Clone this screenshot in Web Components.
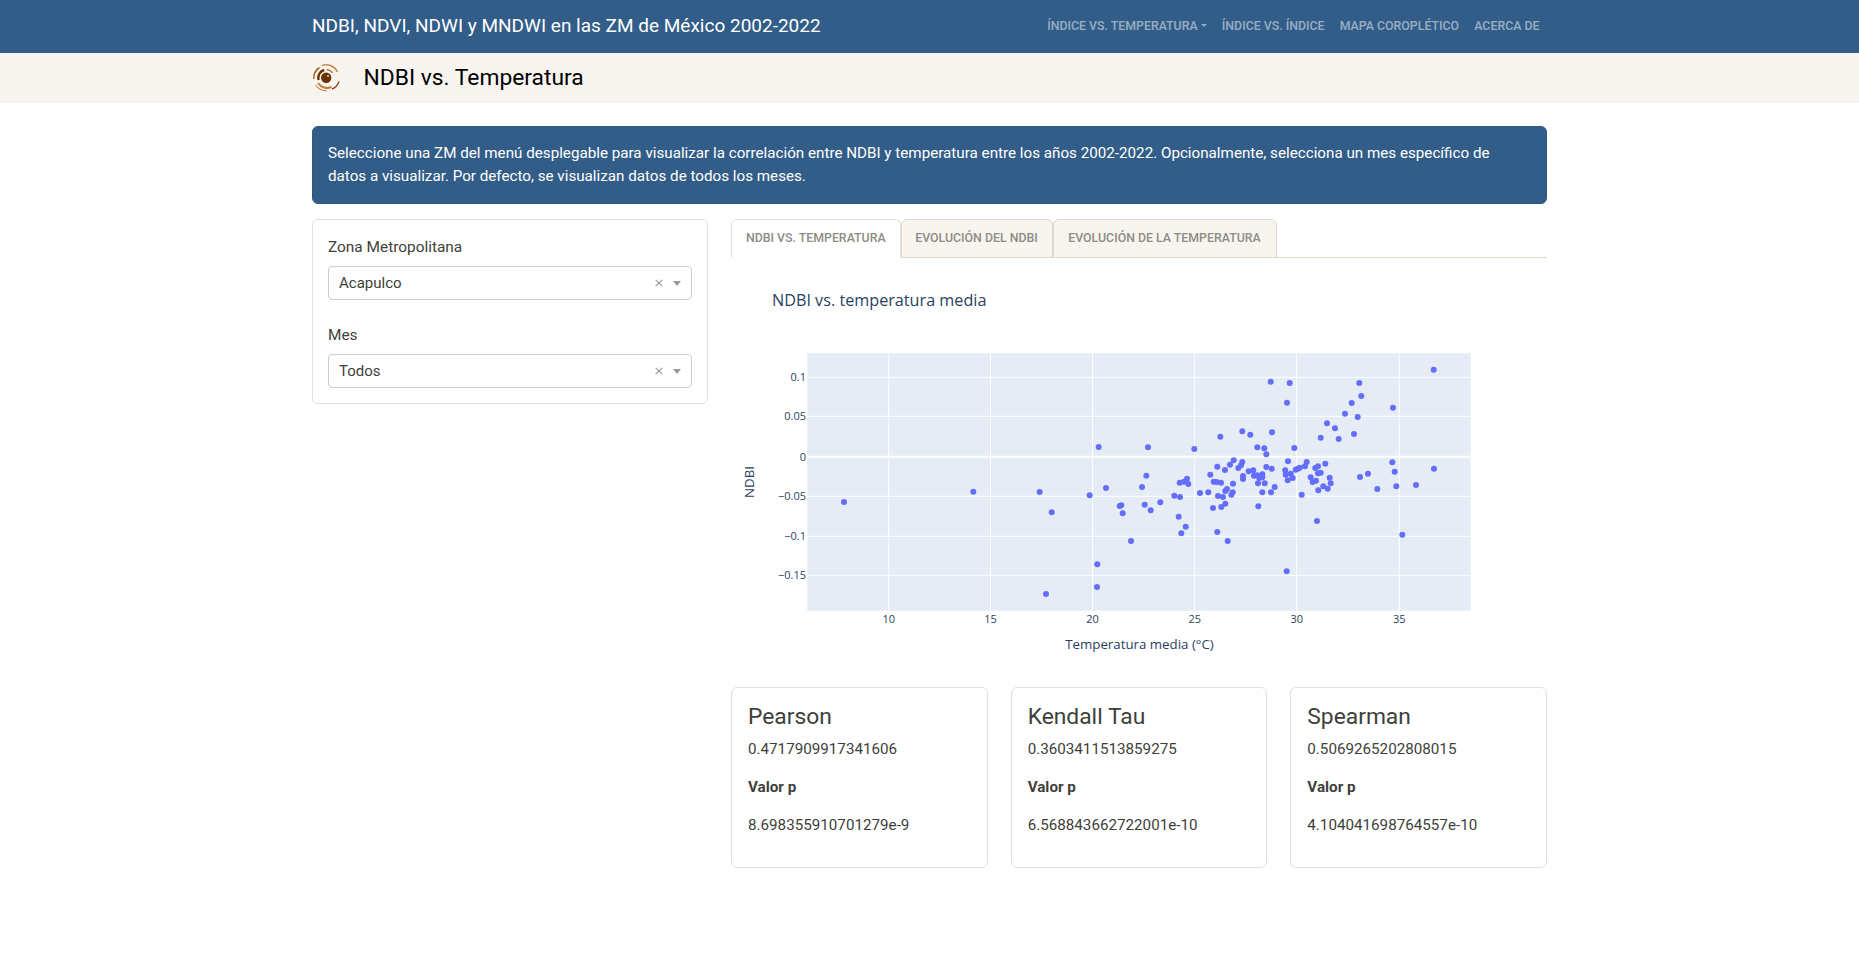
<!DOCTYPE html>
<html lang="es"><head><meta charset="utf-8"><title>NDBI vs. Temperatura</title>
<style>
html,body{margin:0;padding:0;background:#fff}
body{font:15.2px/22.8px Roboto,"Liberation Sans",sans-serif;color:#3e3f3a}
</style></head><body>
<app-navbar></app-navbar>
<page-header heading="NDBI vs. Temperatura"></page-header>
<page-main>
  <info-alert>Seleccione una ZM del menú desplegable para visualizar la correlación entre NDBI y temperatura entre los años 2002-2022. Opcionalmente, selecciona un mes específico de datos a visualizar. Por defecto, se visualizan datos de todos los meses.</info-alert>
  <filter-card slot="side">
    <select-box label="Zona Metropolitana" value="Acapulco"></select-box>
    <select-box label="Mes" value="Todos"></select-box>
  </filter-card>
  <tab-bar slot="content"></tab-bar>
  <scatter-chart slot="content"></scatter-chart>
  <stat-row slot="content">
    <stat-card name="Pearson" value="0.4717909917341606" p="8.698355910701279e-9"></stat-card>
    <stat-card name="Kendall Tau" value="0.3603411513859275" p="6.568843662722001e-10"></stat-card>
    <stat-card name="Spearman" value="0.5069265202808015" p="4.104041698764557e-10"></stat-card>
  </stat-row>
</page-main>
<script>
function def(name, css, html, init){
  customElements.define(name, class extends HTMLElement{
    constructor(){super();this.attachShadow({mode:'open'});}
    connectedCallback(){
      const h = typeof html==='function'?html(this):html;
      this.shadowRoot.innerHTML='<style>'+css+'</style>'+h;
      if(init)init(this);
    }
  });
}
def('app-navbar',`
:host{display:block;background:#325d88;height:53px;box-sizing:border-box;padding-bottom:2px}
.in{width:1235px;margin:0 auto;height:100%;display:flex;align-items:center;justify-content:space-between}
.brand{color:#fff;font-size:19px;line-height:28px}
nav{display:flex;gap:15.2px;padding-right:7.5px}
a{color:rgba(255,255,255,.5);font-size:12.35px;font-weight:500;text-transform:uppercase;line-height:18px;display:flex;align-items:center}
i{display:inline-block;margin-left:3px;border-top:3.5px solid currentColor;border-left:3.5px solid transparent;border-right:3.5px solid transparent}
`,`<div class="in"><div class="brand">NDBI, NDVI, NDWI y MNDWI en las ZM de México 2002-2022</div>
<nav><a>Índice vs. temperatura<i></i></a><a>Índice vs. índice</a><a>Mapa coroplético</a><a>Acerca de</a></nav></div>`);
def('page-header',`
:host{display:block;background:#f8f5f0;height:50px;box-sizing:border-box;padding-bottom:2px}
.in{width:1235px;margin:0 auto;height:100%;display:flex;align-items:center;gap:22px}
svg{width:30px;height:30px;flex:none;margin-left:-.5px}
h1{margin:0;font-size:22.8px;font-weight:400;color:#000;line-height:27px}
`,el=>`<div class="in"><svg viewBox="0 0 30 30" fill="none">
<circle cx="14.2" cy="15.7" r="5.2" fill="#6b3204"/><circle cx="16" cy="14" r="1" fill="#e8c7a8"/>
<path d="M6.6 18A8 8 0 0 1 12.2 8" stroke="#6b3204" stroke-width="2.4"/>
<path d="M14.5 7.7A8 8 0 0 1 20.5 10.8" stroke="#b5682c" stroke-width="1.2"/>
<path d="M6 21A11 11 0 0 0 19.5 25" stroke="#c77b3b" stroke-width="2"/>
<path d="M10 3.6A12.5 12.5 0 0 1 25.5 10" stroke="#c9874d" stroke-width="1.5"/>
<path d="M1.9 17A12.5 12.5 0 0 1 7.5 5.5" stroke="#a85f28" stroke-width="1.5"/>
<path d="M3.5 23A13 13 0 0 0 15 28.7" stroke="#c9874d" stroke-width="1.2"/>
<path d="M20 27.2A13 13 0 0 0 27 19.5" stroke="#8a4a1c" stroke-width="1.4"/>
</svg><h1>${el.getAttribute('heading')}</h1></div>`);
def('page-main',`
:host{display:block;width:1235px;margin:23px auto 0}
.row{display:grid;grid-template-columns:395.5px 816px;column-gap:23.5px}
`,`<slot></slot><div class="row"><div><slot name="side"></slot></div><div><slot name="content"></slot></div></div>`);
def('info-alert',`
:host{display:block;background:#325d88;color:#fff;border:1px solid #2f5880;border-radius:6px;padding:15px;margin-bottom:15.5px;height:77.6px;box-sizing:border-box}
`,`<slot></slot>`);
def('filter-card',`
:host{display:flex;flex-direction:column;gap:23px;border:1px solid #e6dfd5;border-radius:6px;padding:15px}
`,`<slot></slot>`);
def('select-box',`
:host{display:block}
label{display:block;padding-top:1px;margin-bottom:7px;line-height:22.8px;font-size:15.4px}
.c{display:flex;align-items:center;height:34px;box-sizing:border-box;border:1px solid #ccc;border-radius:4px;padding:0 10px}
.v{flex:1;line-height:32px;font-size:15px}
.x{color:#999;width:17px;text-align:center;font-family:"DejaVu Sans",sans-serif;font-size:13px;line-height:18px}
.a{border-top:5px solid #999;border-left:4.5px solid transparent;border-right:4.5px solid transparent;margin:1px 0 0 5px}
`,el=>`<label>${el.getAttribute('label')}</label><div class="c"><span class="v">${el.getAttribute('value')}</span><span class="x">×</span><span class="a"></span></div>`);
def('tab-bar',`
:host{display:flex;border-bottom:1px solid #dfd7ca;height:39px;box-sizing:border-box}
a{box-sizing:border-box;height:39px;border:1px solid #dfd7ca;border-radius:6px 6px 0 0;background:#f8f5f0;color:#8e8c84;font-size:12.35px;font-weight:500;text-transform:uppercase;display:flex;align-items:center;justify-content:center}
a.on{background:#fff;border-color:#e6dfd5;border-bottom-color:#fff}
`,`<a class="on" style="width:169.5px">NDBI vs. Temperatura</a><a style="width:152px">Evolución del NDBI</a><a style="width:224px">Evolución de la temperatura</a>`);
def('scatter-chart',`
:host{display:block;height:428.7px}
svg{display:block;width:816px;height:428.7px}
text{font-family:"Open Sans",sans-serif;fill:#2a3f5f}
`,`<svg id="s" viewBox="731 258 816 428.7" xmlns="http://www.w3.org/2000/svg"></svg>`,el=>{
  const s=el.shadowRoot.getElementById('s');
  const xs=[[888.7,'10'],[990.5,'15'],[1092.5,'20'],[1194.7,'25'],[1296.7,'30'],[1399.3,'35']];
  const ys=[[377.3,'0.1'],[416.3,'0.05'],[456.7,'0'],[496.3,'−0.05'],[536.3,'−0.1'],[575.3,'−0.15']];
  let h='<rect x="807.3" y="353.3" width="663.4" height="257.4" fill="#e5ecf6"/>';
  xs.forEach(([x,t])=>{h+=`<line x1="${x}" x2="${x}" y1="353.3" y2="610.7" stroke="#fff"/><text x="${x}" y="623" text-anchor="middle" font-size="11">${t}</text>`;});
  ys.forEach(([y,t])=>{h+=`<line x1="807.3" x2="1470.7" y1="${y}" y2="${y}" stroke="#fff" stroke-width="${t==='0'?2:1}"/><text x="806" y="${y+4}" text-anchor="end" font-size="11">${t}</text>`;});
  const a=[[342,486],[730,455],[929,456],[965,517],[1079,466],[1106,321],[1102,673],[1101,741],[948,762]];
  const b=[[1001,89],[512,125],[569,129],[778,129],[784,168],[561,188],[879,203],[755,189],[735,221],[773,231],[681,250],[705,265],[427,274],[451,284],[516,277],[361,290],[662,293],[716,297],[762,282],[472,322],[493,325],[583,324],[144,322],[283,327],[499,343],[401,361],[427,366],[564,364],[620,366],[676,371],[877,367],[423,376],[390,374],[352,380],[375,390],[415,384],[499,381],[515,386],[556,391],[587,389],[593,386],[599,383],[615,379],[646,384],[654,379],[1002,386],[884,395],[804,401],[780,411],[662,398],[654,400],[572,401],[557,404],[446,394],[460,391],[487,403],[331,404],[139,407],[261,416],[252,425],[239,428],[265,432],[341,425],[350,426],[363,428],[429,408],[429,417],[462,407],[471,406],[478,414],[487,412],[578,414],[563,421],[632,412],[689,413],[648,422],[638,426],[692,430],[670,439],[683,446],[655,451],[474,430],[494,430],[399,431],[524,441],[126,441],[889,439],[948,435],[832,447],[18,444],[381,447],[376,453],[398,457],[394,464],[487,457],[513,457],[605,464],[300,459],[325,457],[223,467],[240,471],[354,468],[369,471],[64,496],[59,498],[134,494],[181,487],[152,511],[68,520],[376,491],[364,501],[339,504],[475,499],[236,530],[257,560],[244,580],[352,576],[383,603],[93,603],[651,543],[907,584],[560,694]];
  a.forEach(([x,y])=>{h+=`<circle cx="${(730+x/3).toFixed(1)}" cy="${(340+y/3).toFixed(1)}" r="3" fill="#636efa"/>`;});
  b.forEach(([x,y])=>{h+=`<circle cx="${(1100+x/3).toFixed(1)}" cy="${(340+y/3).toFixed(1)}" r="3" fill="#636efa"/>`;});
  h+=`<text x="772" y="306" font-size="16.2">NDBI vs. temperatura media</text>`;
  h+=`<text x="1139.5" y="649.5" text-anchor="middle" font-size="13.3">Temperatura media (°C)</text>`;
  h+=`<text transform="translate(754 482) rotate(-90)" text-anchor="middle" font-size="13.3">NDBI</text>`;
  s.innerHTML=h;
});
def('stat-row',`:host{display:grid;grid-template-columns:repeat(3,1fr);column-gap:23px}`,`<slot></slot>`);
def('stat-card',`
:host{display:block;border:1px solid #e6dfd5;border-radius:6px;padding:15px 16px}
h5{margin:0 0 8px;font-size:22.8px;font-weight:400;line-height:27px}
p{margin:0 0 15.2px}
b{font-weight:700}
`,el=>`<h5>${el.getAttribute('name')}</h5><p>${el.getAttribute('value')}</p><p><b>Valor p</b></p><p>${el.getAttribute('p')}</p>`);
</script>
</body></html>
